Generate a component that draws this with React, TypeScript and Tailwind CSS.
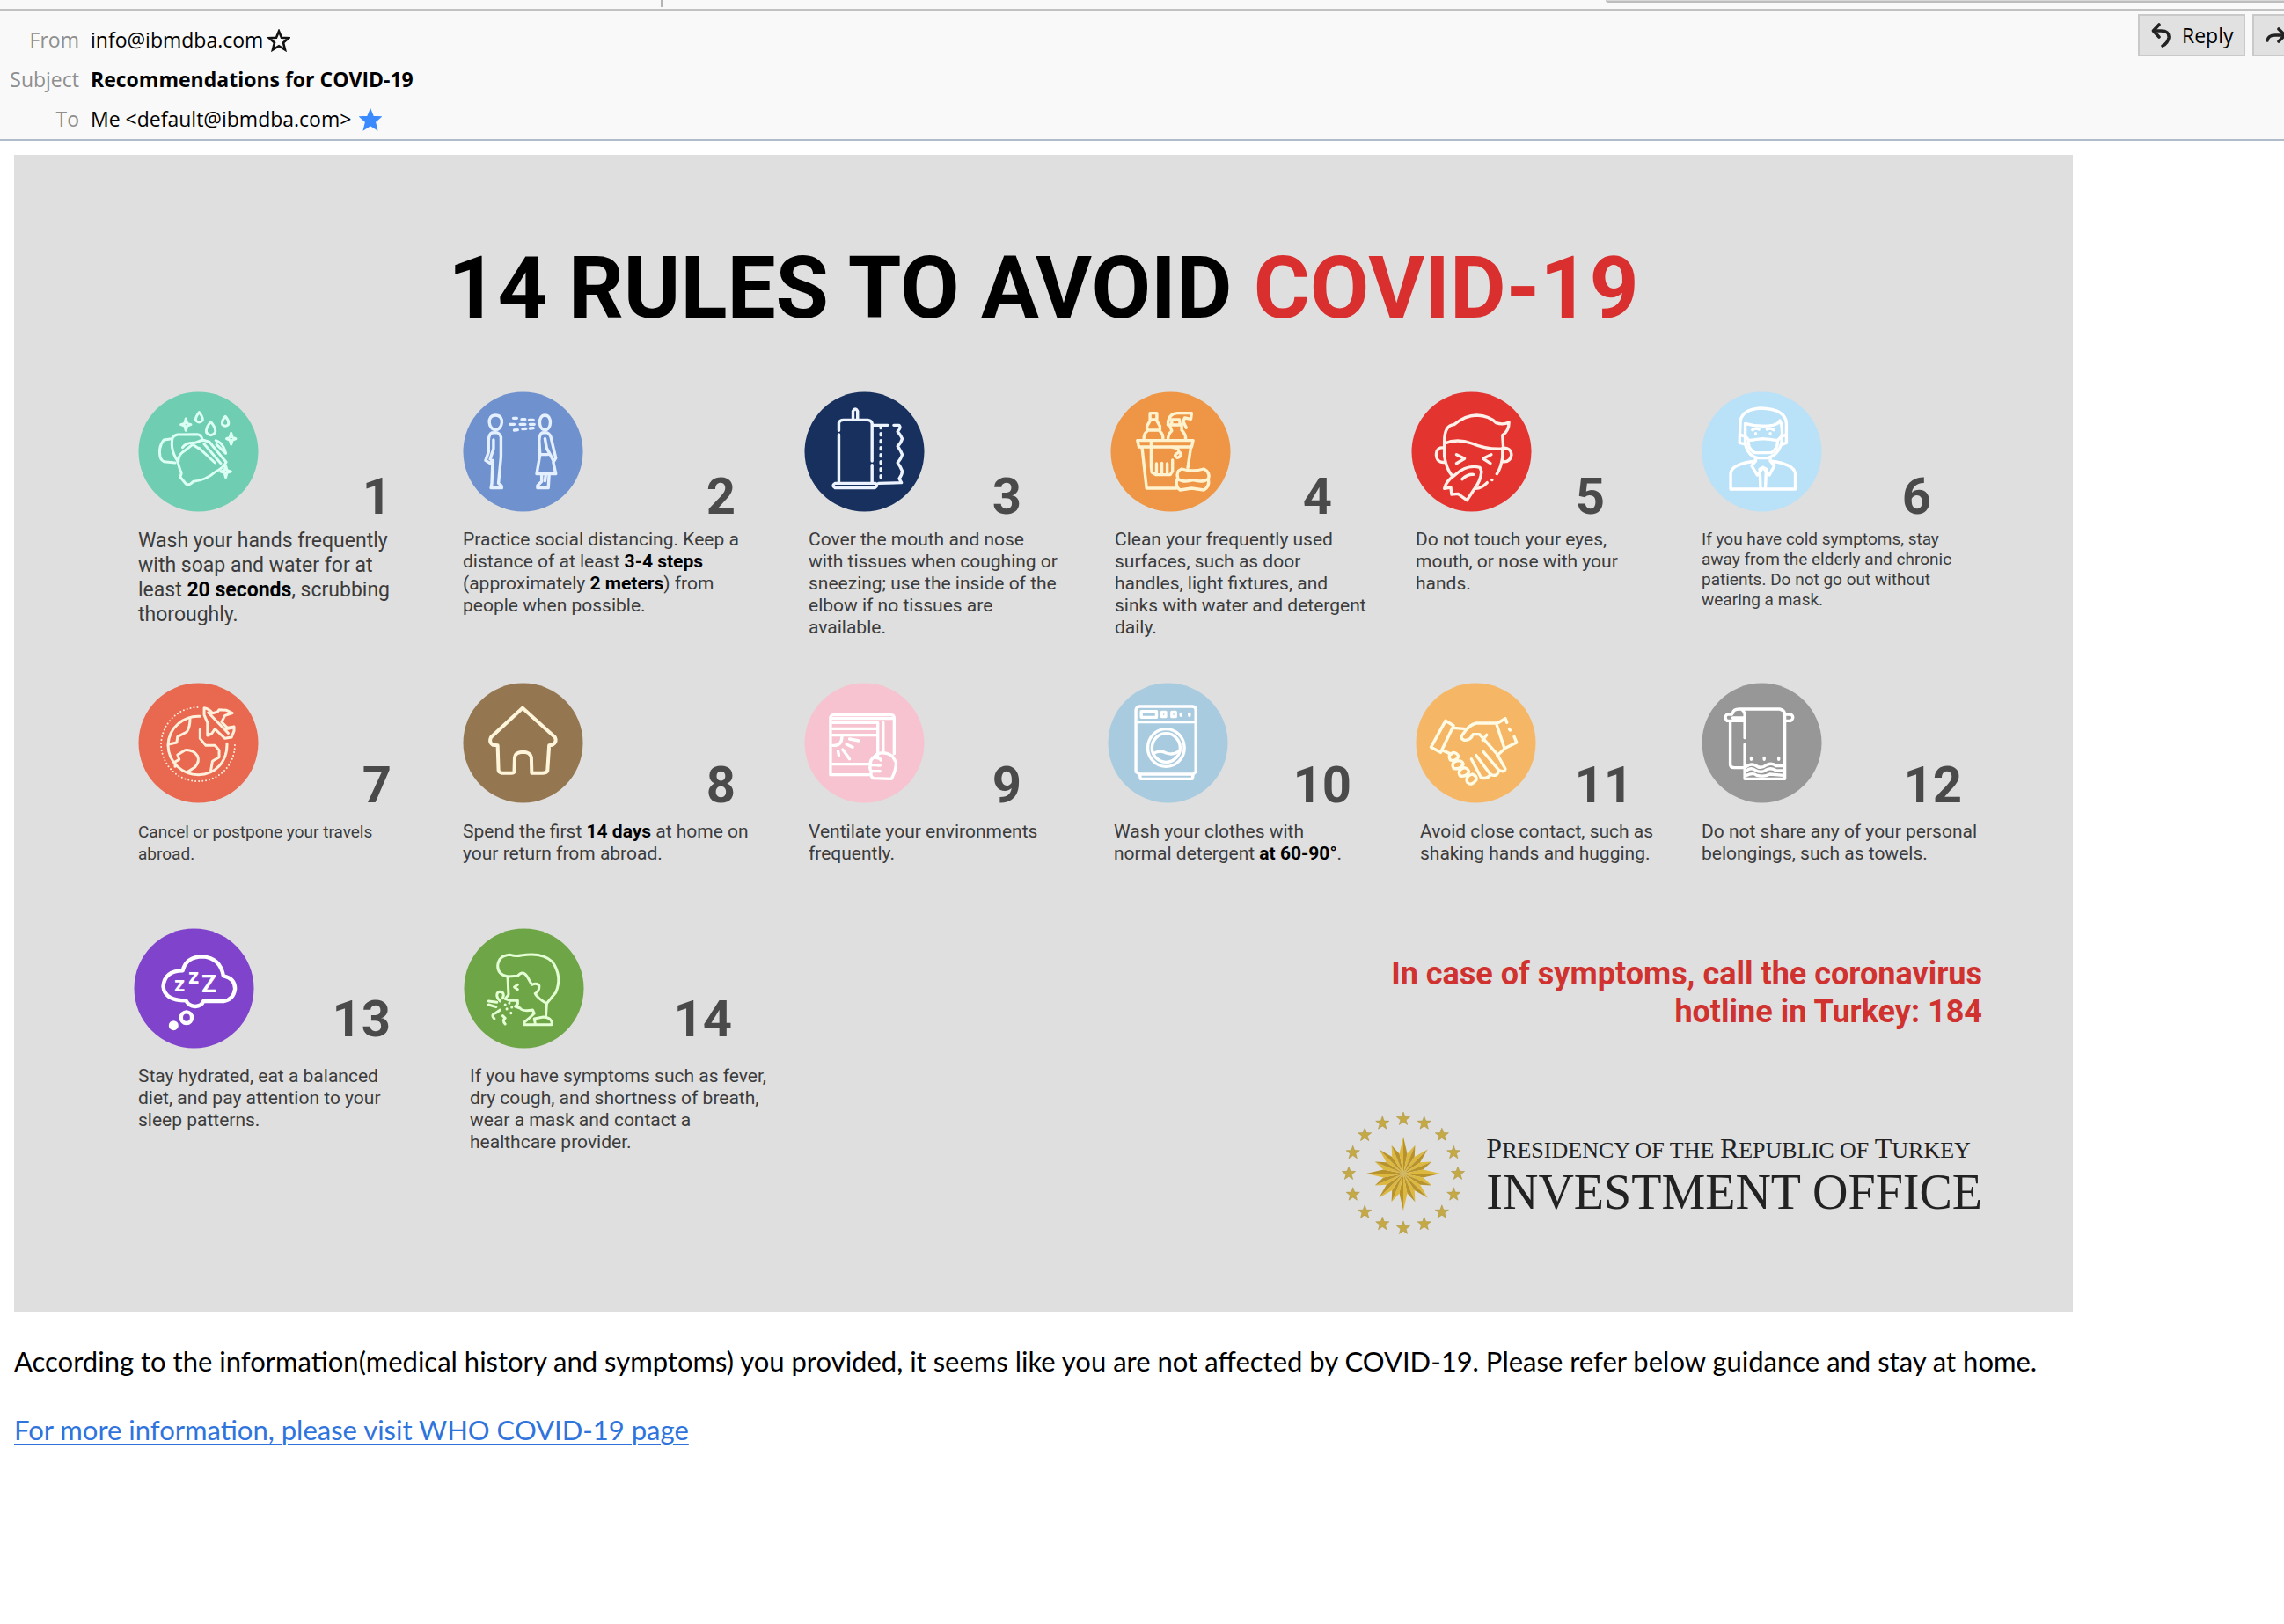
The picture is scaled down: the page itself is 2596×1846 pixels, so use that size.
import React from "react";

type Frame = { left: number; top: number; sx: number; sy: number };

// Every drawing has its own unit grid; the frame gives the grid's origin and its units per pixel.
const grid = (left: number, top: number, sx: number, sy = 3): Frame => ({ left, top, sx, sy });

function Badge({
  fill,
  stroke = "#ffffff",
  frame,
  width = 3.4,
  label,
  children,
  extra,
}: {
  fill: string;
  stroke?: string;
  frame: Frame;
  width?: number;
  label: string;
  children: React.ReactNode;
  extra?: React.ReactNode;
}) {
  return (
    <svg
      viewBox="0 0 137 137"
      role="img"
      aria-label={label}
      className="size-[137px] shrink-0 [&_g_*]:[vector-effect:non-scaling-stroke]"
    >
      <circle cx="68.5" cy="68.5" r="68" fill={fill} />
      <g
        transform={`scale(${1 / frame.sx} ${1 / frame.sy}) translate(${-frame.left} ${-frame.top})`}
        fill="none"
        stroke={stroke}
        strokeWidth={width}
        strokeLinecap="round"
        strokeLinejoin="round"
      >
        {children}
      </g>
      {extra}
    </svg>
  );
}

const WashHands = () => (
  <Badge fill="#6fcdb2" stroke="#dcfff4" width={3} frame={grid(35, 45, 2.119)} label="Washing hands">
    <path d="M116 206L97 210Q86 228 87 255Q87 278 97 284L124 288" />
    <path d="M190 212Q188 192 178 191L130 192Q117 196 117 210Q113 246 130 282" />
    <path d="M142 236Q150 218 172 220L190 210L204 216" />
    <path d="M132 284Q130 262 148 246L166 226" />
    <path d="M130 284L136 312Q142 324 136 336L150 360Q158 368 168 352Q198 348 222 318Q240 306 247 286" />
    <path d="M166 226L182 240M182 238L220 288M194 224L234 290M206 216L246 284M222 212Q240 220 246 256L224 226" />
    <path d="M182 116Q172 134 174 144Q182 156 190 144Q192 134 182 116ZM210 148Q196 172 200 186Q210 202 220 186Q224 172 210 148ZM245 130Q235 146 238 158Q245 168 252 158Q255 146 245 130Z" />
    <path d="M150 138L153 154L162 158L153 162L150 178L147 162L138 158L147 154ZM259 187L262 201L270 206L262 211L259 225L256 211L248 206L256 201ZM246 298L249 314L258 318L249 322L246 338L243 322L234 318L243 314Z" />
  </Badge>
);

const Distance = () => (
  <Badge fill="#6f92cf" stroke="#e4f0ff" frame={grid(818, 45, 2.119)} label="Two people apart">
    <path d="M897 126C874 126 880 176 897 176S920 126 897 126Z" />
    <path d="M888 186Q880 192 880 214L880 252L873 280L884 290L890 280L888 358L886 374L912 374L911 366L904 358L910 268L910 200Q906 186 898 185ZM892 210L892 240L884 276" />
    <path d="M1016 126C998 126 1000 176 1016 176S1034 126 1016 126Z" />
    <path d="M1009 186Q1002 192 1002 214L1004 260L996 326L1042 326L1036 286L1042 272L1030 200Q1026 186 1018 185ZM1016 206L1020 238L1036 280M1004 260L1022 260" />
    <path d="M1008 328L1008 352L998 366L998 374L1024 374L1026 328M1018 328L1016 350" />
    <path d="M940 136L948 136M960 140L968 140M978 142L988 142M932 157L942 157M956 157L968 157M980 157L990 157M942 177L950 176M962 173L970 172M980 171L988 170" />
  </Badge>
);

const Tissue = () => (
  <Badge fill="#17305d" stroke="#eef4ff" frame={grid(31, 45, 2.306)} label="Paper towel roll">
    <path d="M159 140L159 112Q165 98 171 112L171 140" />
    <path d="M122 178L122 152Q124 142 134 142L198 142Q208 144 209 154L209 282M122 192L122 356M209 296L209 356" />
    <path d="M112 358L218 358Q226 366 216 374L112 374Q102 366 112 358Z" />
    <path d="M212 160L250 160M266 160L280 160Q286 168 276 182Q284 194 288 206Q286 218 276 232Q284 246 288 260Q286 272 276 288Q284 302 288 316Q288 330 280 342L286 356L226 358" />
    <path d="M232 164L232 352" strokeDasharray="2 6" />
  </Badge>
);

const Bucket = () => (
  <Badge fill="#ee9645" stroke="#fff3cf" frame={grid(835, 44, 2.306)} label="Cleaning supplies">
    <path d="M939 118L957 118L957 144L965 162L965 176L931 176L931 162L939 144ZM939 140L957 140M931 180Q922 188 923 208M965 180Q974 188 973 208" />
    <path d="M986 158Q986 120 1010 118L1048 118L1046 138L1030 134L1026 146L1034 168M996 158L996 140L1016 140L1018 158ZM990 158L1022 158L1022 176Q1034 190 1032 208M990 158L996 178Q986 190 986 208" />
    <path d="M906 211L1052 211L1048 233L910 233ZM918 234L930 374L1008 374M1046 234L1038 304" />
    <path d="M942 212L942 300L944 320L954 328L992 328L998 316L998 278M956 290L956 326M970 288L970 326M984 290L984 326M998 234Q1018 238 1014 252Q998 262 1010 270Q1020 268 1020 254" />
    <path d="M1022 308Q1050 320 1080 308Q1098 320 1092 342Q1078 356 1052 346Q1026 356 1012 342Q1006 316 1022 308ZM1010 344Q1004 368 1018 380L1048 374L1080 380Q1096 368 1092 344" />
  </Badge>
);

const CoughFace = () => (
  <Badge fill="#e3342f" stroke="#fff0ea" frame={grid(52, 45, 2.178)} label="Face with tissue">
    <path d="M134 216Q134 160 158 158Q186 126 214 126Q246 128 262 152Q280 160 294 150Q294 180 278 194L280 240Q240 244 202 222Q166 204 134 222Z" />
    <path d="M134 222L134 264Q138 306 152 330M278 240L278 270Q274 306 264 326M134 236Q114 234 114 262Q116 290 136 286M278 238Q300 236 300 262Q296 288 278 284" />
    <path d="M164 260L184 274L164 290M250 260L230 274L248 290M252 346L252 347M240 356Q226 376 212 376" />
    <path d="M222 304Q190 292 160 330Q138 350 134 376L150 372L152 396L168 394L180 406L190 416L208 378Q224 350 226 318ZM178 344Q192 326 206 328" />
  </Badge>
);

const MaskMan = () => (
  <Badge fill="#b9e1f8" frame={grid(768, 41, 2.178)} label="Man wearing a mask">
    <path d="M874 220L862 216L864 140Q870 102 914 98Q976 100 978 150L978 216L966 222" />
    <path d="M876 216L876 150Q910 164 944 156Q958 152 962 140Q970 160 966 216M866 190L876 194M976 190L966 194" />
    <path d="M884 208Q906 204 918 202Q936 204 956 208Q958 236 940 250L900 250Q882 236 884 208ZM876 194L886 208M966 194L956 208M876 216Q880 260 908 268L932 268Q958 258 966 216" />
    <path d="M902 268L902 278Q842 288 840 320L840 374L1000 374L1000 320Q996 288 938 278L938 268M902 278L892 294L906 326L920 300L936 326L948 294L938 278M912 306L920 300L928 306L926 372M912 306L914 372" />
    <path d="M894 172Q902 164 910 170M930 170Q938 164 946 172M902 184L902 185M938 184L938 185" />
  </Badge>
);

const Travel = () => (
  <Badge fill="#e96850" stroke="#fff0dc" width={3} frame={grid(35, 48, 2.119)} label="Globe and plane">
    <path d="M184 163C146 160 108 200 107 262C108 320 142 362 180 362C222 362 250 316 249 256" />
    <path d="M178 132C128 134 92 190 90 258C92 330 130 384 180 384C230 384 268 330 268 258" strokeDasharray="0 4" strokeWidth="2" />
    <path d="M160 170Q160 200 152 216L130 232L128 252L108 258M184 208L184 238L198 262L220 262L230 278L230 302L214 316L210 348M124 334L124 318L134 310L130 294L148 278Q168 276 178 298Q184 316 172 336L156 350" />
    <path d="M194 134Q206 136 214 152L226 148L230 140L248 142L262 152L244 160L236 182L250 202L266 198L266 212L260 234L244 238L232 222L220 206L212 222L202 228L202 184L194 158ZM204 150L252 220M246 206L262 202" />
  </Badge>
);

const Home = () => (
  <Badge fill="#947650" stroke="#fff5da" frame={grid(818, 48, 2.119)} label="House" width={4}>
    <path d="M962 134L1040 234Q1046 250 1034 260L1026 262L1022 348Q1020 356 1010 356L984 356L983 302Q980 284 962 284Q944 286 943 302L942 350Q942 356 934 356L912 356Q904 354 904 346L902 262L890 260Q880 250 886 234Z" />
  </Badge>
);

const Blinds = () => (
  <Badge fill="#f7c3d0" frame={grid(31, 48, 2.306)} label="Opening blinds">
    <path d="M108 158L260 158Q267 160 267 168L267 290M100 362L100 166Q102 158 108 158M100 362L200 362" />
    <path d="M106 184L220 184M106 205L220 205M106 227L220 227M106 326L204 326M224 184L224 296M238 184L238 286M106 170L262 170" />
    <path d="M106 262Q130 264 130 232M132 276L150 308M120 282L122 296M142 258L158 268M150 240L174 246" />
    <path d="M222 292Q240 280 262 298L272 320Q272 346 260 376L212 374Q202 364 208 350Q200 342 206 328Q202 314 212 304ZM212 304Q228 302 232 312M206 328L230 330M208 350L230 350" />
  </Badge>
);

const Washer = () => (
  <Badge fill="#a9cbdf" frame={grid(828, 48, 2.306)} label="Washing machine">
    <path d="M902 352L902 140Q904 129 912 129L1050 129Q1059 130 1059 140L1059 352L1052 360L1050 376L914 376L912 360ZM904 182L1058 182M912 360L1052 360" />
    <path d="M916 146L956 146L956 166L916 166Z" />
    <path d="M970 148L980 148L980 164L970 164ZM996 148L1006 148L1006 164L996 164ZM1020 154L1020 160M1042 154L1042 160" />
    <ellipse cx="981" cy="270" rx="48" ry="64" />
    <ellipse cx="981" cy="270" rx="37" ry="49" />
    <path d="M948 290Q964 276 982 288Q1000 296 1014 282" />
  </Badge>
);

const Handshake = () => (
  <Badge fill="#f5b766" stroke="#fffbe4" frame={grid(64, 52, 2.178)} label="Handshake">
    <path d="M138 182L158 198L126 290L102 272ZM158 206L188 210M130 282L152 296M286 174L264 192L284 276L314 256L308 236M286 174L290 188M296 210L298 214" />
    <path d="M264 190L214 190Q196 196 182 226Q172 240 184 248Q200 250 206 228L222 228L266 296L286 346Q284 360 270 350L232 288M240 230L230 248M266 300L284 278" />
    <path d="M270 350Q268 374 250 366L214 300M250 364Q242 382 226 376L202 312" />
    <path d="M158 290Q142 296 150 316Q164 322 170 304Q168 292 158 290ZM168 318Q150 324 158 344Q174 350 182 330Q180 318 168 318ZM184 342Q166 350 174 370Q190 374 196 356Q194 344 184 342ZM204 364Q186 372 192 392Q202 406 214 384Q216 368 204 364Z" />
  </Badge>
);

const Towel = () => (
  <Badge fill="#979797" frame={grid(771, 52, 2.178)} label="Towel on a rail">
    <path d="M846 160L834 160Q826 170 834 182L876 182M848 172L876 172M842 186L842 332Q842 342 852 342L874 342M848 156Q850 142 864 142L964 142Q977 146 977 160L977 380L878 380L878 262M878 240L878 160Q876 146 868 142M978 160L992 160Q1002 170 992 182L980 182" />
    <path d="M882 338Q892 326 904 334Q918 348 930 334Q944 322 956 336L972 336M882 352Q892 340 904 350Q918 362 930 350Q944 340 956 352L972 352M882 368Q898 358 908 368Q926 374 940 364L974 368M894 308L894 314M926 308L926 314M962 308L962 314" />
  </Badge>
);

const Sleep = () => (
  <Badge
    fill="#8043cb"
    frame={grid(24, 45, 2.119)}
    label="Sleeping"
    width={4.4}
    extra={
      <g fill="#ffffff" className="font-[Roboto] font-bold">
        <text x="46" y="72" fontSize="24">z</text>
        <text x="62" y="63" fontSize="24">z</text>
        <text x="77" y="73" fontSize="28">Z</text>
      </g>
    }
  >
    <path d="M142 190Q150 142 190 142Q232 146 240 208Q268 216 268 252Q264 290 240 294L192 294Q188 310 172 312Q156 310 150 292Q98 292 95 244Q98 190 142 190Z" />
    <ellipse cx="151" cy="350" rx="13" ry="19" />
    <ellipse cx="120" cy="377" rx="7" ry="10" fill="#ffffff" />
  </Badge>
);

const Cough = () => (
  <Badge fill="#6ea547" stroke="#e4ffd4" width={3} frame={grid(820, 45, 2.119)} label="Coughing person">
    <path d="M926 210Q902 204 902 174Q904 138 932 136Q946 142 958 138Q1010 126 1034 160Q1058 210 1042 264L1020 302L1018 348" />
    <path d="M926 210L928 272L920 286L932 292M926 210L950 208Q962 188 972 208L984 238Q998 230 1002 242Q1002 262 992 268Q998 284 1020 302M950 238L942 246L950 254" />
    <path d="M934 292L950 292L950 304L944 312L956 318Q962 330 986 324L990 336Q980 350 966 366L966 374L1032 374Q1034 350 1012 348L990 354L992 368" />
    <path d="M914 284Q920 264 908 262Q896 264 902 284L908 294M880 294L900 298M880 306L898 314M894 354Q884 340 898 334L908 324M920 372Q912 360 920 352L914 344" />
    <path d="M920 306L920 307M930 300L930 301M924 320L924 321M936 314L936 315M934 334L934 335" />
  </Badge>
);

type Rule = {
  n: number;
  icon: React.ReactNode;
  head: string;
  text: string;
  body: React.ReactNode;
};

const body = "text-[21px] leading-[25px]";

const rowOne: Rule[] = [
  {
    n: 1,
    icon: <WashHands />,
    head: "w-[288px]",
    text: "text-[23px] leading-[28px]",
    body: (
      <>
        Wash your hands frequently
        <br />
        with soap and water for at
        <br />
        least <b className="text-black">20 seconds</b>, scrubbing
        <br />
        thoroughly.
      </>
    ),
  },
  {
    n: 2,
    icon: <Distance />,
    head: "w-[310px]",
    text: body,
    body: (
      <>
        Practice social distancing. Keep a
        <br />
        distance of at least <b className="text-black">3-4 steps</b>
        <br />
        (approximately <b className="text-black">2 meters</b>) from
        <br />
        people when possible.
      </>
    ),
  },
  {
    n: 3,
    icon: <Tissue />,
    head: "w-[247px]",
    text: `${body} pl-[5px]`,
    body: (
      <>
        Cover the mouth and nose
        <br />
        with tissues when coughing or
        <br />
        sneezing; use the inside of the
        <br />
        elbow if no tissues are
        <br />
        available.
      </>
    ),
  },
  {
    n: 4,
    icon: <Bucket />,
    head: "w-[252px]",
    text: `${body} pl-[5px]`,
    body: (
      <>
        Clean your frequently used
        <br />
        surfaces, such as door
        <br />
        handles, light fixtures, and
        <br />
        sinks with water and detergent
        <br />
        daily.
      </>
    ),
  },
  {
    n: 5,
    icon: <CoughFace />,
    head: "w-[220px]",
    text: `${body} pl-[5px]`,
    body: (
      <>
        Do not touch your eyes,
        <br />
        mouth, or nose with your
        <br />
        hands.
      </>
    ),
  },
  {
    n: 6,
    icon: <MaskMan />,
    head: "w-[261px]",
    text: "text-[19px] leading-[23px]",
    body: (
      <>
        If you have cold symptoms, stay
        <br />
        away from the elderly and chronic
        <br />
        patients. Do not go out without
        <br />
        wearing a mask.
      </>
    ),
  },
];

const rowTwo: Rule[] = [
  {
    n: 7,
    icon: <Travel />,
    head: "w-[288px]",
    text: "text-[19px] leading-[25px]",
    body: (
      <>
        Cancel or postpone your travels
        <br />
        abroad.
      </>
    ),
  },
  {
    n: 8,
    icon: <Home />,
    head: "w-[310px]",
    text: body,
    body: (
      <>
        Spend the first <b className="text-black">14 days</b> at home on
        <br />
        your return from abroad.
      </>
    ),
  },
  {
    n: 9,
    icon: <Blinds />,
    head: "w-[247px]",
    text: `${body} pl-[5px]`,
    body: (
      <>
        Ventilate your environments
        <br />
        frequently.
      </>
    ),
  },
  {
    n: 10,
    icon: <Washer />,
    head: "w-[277px]",
    text: `${body} pl-[7px]`,
    body: (
      <>
        Wash your clothes with
        <br />
        normal detergent <b className="text-black">at 60-90°</b>.
      </>
    ),
  },
  {
    n: 11,
    icon: <Handshake />,
    head: "w-[247px]",
    text: `${body} pl-[5px]`,
    body: (
      <>
        Avoid close contact, such as
        <br />
        shaking hands and hugging.
      </>
    ),
  },
  {
    n: 12,
    icon: <Towel />,
    head: "w-[296px]",
    text: body,
    body: (
      <>
        Do not share any of your personal
        <br />
        belongings, such as towels.
      </>
    ),
  },
];

const rowThree: Rule[] = [
  {
    n: 13,
    icon: <Sleep />,
    head: "w-[292px]",
    text: `${body} pl-[5px]`,
    body: (
      <>
        Stay hydrated, eat a balanced
        <br />
        diet, and pay attention to your
        <br />
        sleep patterns.
      </>
    ),
  },
  {
    n: 14,
    icon: <Cough />,
    head: "w-[305px]",
    text: `${body} pl-[7px]`,
    body: (
      <>
        If you have symptoms such as fever,
        <br />
        dry cough, and shortness of breath,
        <br />
        wear a mask and contact a
        <br />
        healthcare provider.
      </>
    ),
  },
];

function RuleCard({ rule, head, gap }: { rule: Rule; head: string; gap: string }) {
  return (
    <li>
      <div className={`flex justify-between ${rule.head} ${head}`}>
        {rule.icon}
        <span className="self-end text-[58px] leading-[58px] font-bold text-[#4a4a4a]">{rule.n}</span>
      </div>
      <p className={`whitespace-nowrap text-[#3c3c3c] ${gap} ${rule.text}`}>{rule.body}</p>
    </li>
  );
}

function starPoints(cx: number, cy: number, outer: number, inner: number, tips: number) {
  return Array.from({ length: tips * 2 }, (_, i) => {
    const r = i % 2 ? inner : outer;
    const a = (Math.PI * i) / tips - Math.PI / 2;
    return `${(cx + r * Math.cos(a)).toFixed(2)},${(cy + r * Math.sin(a)).toFixed(2)}`;
  }).join(" ");
}

function Emblem() {
  const rays = Array.from({ length: 32 }, (_, i) => {
    const a = (Math.PI * 2 * i) / 32 - Math.PI / 2;
    const r = i % 2 ? 23 : i % 8 === 0 ? 42 : i % 4 ? 35 : 39;
    return [70 + r * Math.cos(a), 70 + r * Math.sin(a)];
  });
  return (
    <svg viewBox="0 0 140 140" role="img" aria-label="Presidential seal" className="size-[140px] shrink-0">
      {Array.from({ length: 16 }, (_, i) => {
        const a = (Math.PI * 2 * i) / 16;
        return (
          <polygon
            key={i}
            fill="#c4a944"
            stroke="#a89040"
            strokeWidth="0.5"
            points={starPoints(70 + 62 * Math.sin(a), 70 - 62 * Math.cos(a), 8, 3.3, 5)}
          />
        );
      })}
      {rays.map(([x, y], i) => {
        const [nx, ny] = rays[(i + 1) % rays.length];
        return (
          <polygon
            key={i}
            fill={i % 2 ? "#dcb93e" : "#b8932c"}
            points={`70,70 ${x.toFixed(2)},${y.toFixed(2)} ${nx.toFixed(2)},${ny.toFixed(2)}`}
          />
        );
      })}
    </svg>
  );
}

function Star({ filled = false }: { filled?: boolean }) {
  return (
    <svg viewBox="0 0 26 26" className="size-[26px] shrink-0" aria-hidden="true">
      <path
        d="M13 2.5L16 9.8L24 10.2L18 15.4L20 23.5L13 19.2L6 23.5L8 15.4L2 10.2L10 9.8Z"
        fill={filled ? "#3b8bff" : "none"}
        stroke={filled ? "#3b8bff" : "#111111"}
        strokeWidth={filled ? 2 : 2.6}
        strokeLinejoin="miter"
      />
    </svg>
  );
}

function MessageHeader() {
  const label = "text-right text-[#8f8f8f]";
  return (
    <header className="overflow-hidden border-b-2 border-[#b1bccb] bg-[#f9f9f9] font-['Open_Sans','Noto_Sans',sans-serif]">
      <div className="flex h-[12px] border-b-2 border-[#c2c2c2]">
        <div className="h-[8px] w-[29%] border-r-2 border-[#b4b4b4]" />
        <div className="ml-auto h-[3px] w-[771px] rounded-bl-md border-b-2 border-[#bdbdbd] bg-[#d8d8d8]" />
      </div>
      <div className="flex items-start justify-between">
        <dl className="grid grid-cols-[90px_auto] gap-x-[13px] pt-[11px] text-[23px] leading-[45px] whitespace-nowrap">
          <dt className={label}>From</dt>
          <dd className="flex items-center gap-[5px] text-black">
            info@ibmdba.com
            <button type="button" aria-label="Add contact">
              <Star />
            </button>
          </dd>
          <dt className={label}>Subject</dt>
          <dd className="font-bold text-black">Recommendations for COVID-19</dd>
          <dt className={label}>To</dt>
          <dd className="flex items-center gap-[9px] text-black">
            Me &lt;default@ibmdba.com&gt;
            <button type="button" aria-label="Edit contact">
              <Star filled />
            </button>
          </dd>
        </dl>
        <div className="flex w-[166px] gap-[8px] pt-[4px]">
          <button
            type="button"
            className="flex h-[48px] w-[122px] shrink-0 items-center gap-[10px] border-2 border-[#c9c9c9] bg-[#e1e1e1] pl-[12px] text-[23px] text-black"
          >
            <svg viewBox="0 0 26 28" className="h-[28px] w-[26px]" fill="none" stroke="#222222" strokeWidth="3.6" aria-hidden="true">
              <path d="M10 2L3.500 9L10 16" strokeLinejoin="round" strokeLinecap="round" />
              <path d="M4 9H12Q22 9 21 17Q20 23 14 26" strokeLinecap="round" />
            </svg>
            Reply
          </button>
          <button
            type="button"
            aria-label="Forward"
            className="flex h-[48px] w-[122px] shrink-0 items-center border-2 border-[#c9c9c9] bg-[#e1e1e1] pl-[12px]"
          >
            <svg viewBox="0 0 28 26" className="h-[26px] w-[28px]" fill="none" stroke="#222222" strokeWidth="3.6" aria-hidden="true">
              <path d="M16 6L23 13L16 20" strokeLinejoin="round" strokeLinecap="round" />
              <path d="M22 13H12Q4 13 3 19" strokeLinecap="round" />
            </svg>
          </button>
        </div>
      </div>
    </header>
  );
}

function Poster() {
  return (
    <section className="w-full max-w-[2340px] bg-[#dfdfdf] pt-[104px] pb-[87px] font-[Roboto,sans-serif]">
      <h1 className="text-center text-[98px] leading-[96px] font-bold whitespace-nowrap text-black">
        14 RULES TO AVOID <span className="text-[#d9302f]">COVID-19</span>
      </h1>
      <ol className="mt-[69px] grid grid-cols-[369fr_388fr_348fr_342fr_330fr_356fr] pr-[66px] pl-[141px]">
        {rowOne.map((r) => (
          <RuleCard key={r.n} rule={r} head="h-[148px]" gap="mt-2" />
        ))}
      </ol>
      <ol className="mt-[50px] grid grid-cols-[369fr_388fr_345fr_350fr_325fr_356fr] pr-[66px] pl-[141px]">
        {rowTwo.map((r) => (
          <RuleCard key={r.n} rule={r} head="h-[145px]" gap="mt-3" />
        ))}
      </ol>
      <div className="mt-[72px] flex items-start justify-between pr-[103px] pl-[136px]">
        <ol className="grid grid-cols-[375px_auto]">
          {rowThree.map((r) => (
            <RuleCard key={r.n} rule={r} head="h-[132px]" gap="mt-6" />
          ))}
        </ol>
        <div className="flex flex-col items-end pt-[31px]">
          <p className="text-right text-[36px] leading-[43px] font-bold whitespace-nowrap text-[#d0322f]">
            In case of symptoms, call the coronavirus
            <br />
            hotline in Turkey: 184
          </p>
          <div className="mt-[92px] flex items-center gap-[24px]">
            <Emblem />
            <div className="font-['Liberation_Serif',serif] whitespace-nowrap text-[#222222]">
              <p className="text-[26px] leading-[38px]">
                <span className="text-[32px]">P</span>RESIDENCY OF THE <span className="text-[32px]">R</span>
                EPUBLIC OF <span className="text-[32px]">T</span>URKEY
              </p>
              <p className="text-[56px] leading-[56px]">INVESTMENT OFFICE</p>
            </div>
          </div>
        </div>
      </div>
    </section>
  );
}

export default function App() {
  return (
    <div className="min-h-screen bg-white">
      <MessageHeader />
      <main className="px-4 pt-4">
        <Poster />
        <div className="mt-[36px] flex flex-col items-start gap-[38px] font-[Lato,sans-serif] text-[31px] leading-[40px] whitespace-nowrap">
          <p className="text-black">
            According to the information(medical history and symptoms) you provided, it seems like you are not affected by
            COVID-19. Please refer below guidance and stay at home.
          </p>
          <a href="#who" className="text-[#2f74dd] underline decoration-2 underline-offset-4">
            For more information, please visit WHO COVID-19 page
          </a>
        </div>
      </main>
    </div>
  );
}
